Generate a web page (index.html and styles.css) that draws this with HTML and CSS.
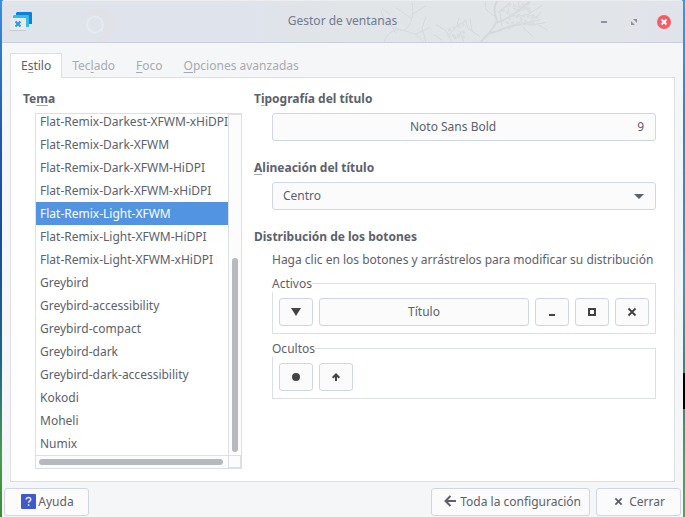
FILE: index.html
```html
<!DOCTYPE html>
<html lang="es">
<head>
<meta charset="utf-8">
<title>Gestor de ventanas</title>
<link rel="stylesheet" href="styles.css">
</head>
<body>
<div class="window">
  <header class="titlebar">
    <svg class="backdrop" viewBox="0 0 681 42" preserveAspectRatio="xMidYMid slice" aria-hidden="true">
      <defs><filter id="soft"><feGaussianBlur stdDeviation="0.6"/></filter></defs>
      <g fill="none" filter="url(#soft)">
        <path d="M80 15q10-12 27-4q12 10 3 24l-8 7h-10q12-10 10-20z" fill="#e1e2e7"/>
        <circle cx="93" cy="24" r="8" fill="#dfe3ea" stroke="#e6eaf2" stroke-width="2"/>
        <g stroke="#d6d9dc" stroke-width="1">
          <path stroke-width="2" d="M478 42c8-8 14-14 17-22M495 20c-4-8-3-14 0-20M487 33c14-3 24-12 46-9M495 22c14-4 20-12 33-21"/>
          <path d="M382 42c4-12 12-14 20-12M402 30c8-6 10-16 8-28M410 14l14-9M409 18l-15-11M400 30l-16-6-5-14M402 30l12 4 8 8M394 33l-6-10M413 34l15-7M424 42l-4-14 4-12M380 8l8 6M450 42l-6-12-10-6M447 35l8-10 2-8M455 25l10-5M462 42l-4-12M440 40l-8-6M478 36l-12-8-3-9M470 30l-2-12M495 18l-12-10M484 8l-1-8M496 12l12-10M508 20l-2-14M514 16l12-2 14-9M518 12l-2-12M528 14l4 10 12-2M521 27l10 9M506 29l14-9M536 24l10 6M511 8l10 2 6-6M500 26l-2-14 8-8M532 18l8-7M525 22l14-3"/>
          <path stroke-dasharray="3 2" stroke-width="3" stroke="#dadde0" d="M506 4l24 5M510 14l26 3M504 22l30 2M500 9l28 14M446 30l16-6M452 38l12-8M520 3l14 15M445 34l20 3"/>
        </g>
      </g>
    </svg>
    <svg class="app-icon" viewBox="0 0 24 20" aria-hidden="true">
      <path fill="#0a80e0" d="M7 0h14q1 0 1 1v11h-3V4H6V1z"/>
      <path fill="#35bce8" d="M4 3h14q1 0 1 1v11h-3V6H3V4z"/>
      <rect x="0" y="6" width="16" height="13" rx="1" fill="#c7cacd"/>
      <rect x="0" y="6" width="16" height="12" rx="1" fill="#e9eaeb"/>
      <path d="M5.500 9.500l5 5m0-5l-5 5" stroke="#2697e2" stroke-width="2"/>
    </svg>
    <h1>Gestor de ventanas</h1>
    <div class="window-controls">
      <button type="button" aria-label="Minimizar"><svg viewBox="0 0 14 14"><path fill="#8e939f" d="M4 6h6v2H4z"/></svg></button>
      <button type="button" aria-label="Maximizar"><svg viewBox="0 0 14 14"><path fill="#8e939f" d="M6 4h4v4zM4 6l4 4H4z"/></svg></button>
      <button type="button" aria-label="Cerrar ventana"><svg viewBox="0 0 14 14"><circle cx="7" cy="7" r="7" fill="#f65c65"/><path d="M4.500 4.500l5 5m0-5l-5 5" stroke="#fff" stroke-width="2"/></svg></button>
    </div>
  </header>

  <div class="tabs" role="tablist">
    <button type="button" class="tab active" role="tab" aria-selected="true">E<u>s</u>tilo</button>
    <button type="button" class="tab" role="tab" aria-selected="false">Tec<u>l</u>ado</button>
    <button type="button" class="tab" role="tab" aria-selected="false"><u>F</u>oco</button>
    <button type="button" class="tab" role="tab" aria-selected="false"><u>O</u>pciones avanzadas</button>
  </div>

  <main class="panel" role="tabpanel">
    <section class="theme">
      <h2 id="theme-title">Te<u>m</u>a</h2>
      <div class="scroller">
        <ul class="rows" role="listbox" aria-labelledby="theme-title" tabindex="0">
          <li role="option">Flat-Remix-Darkest-XFWM-xHiDPI</li>
          <li role="option">Flat-Remix-Dark-XFWM</li>
          <li role="option">Flat-Remix-Dark-XFWM-HiDPI</li>
          <li role="option">Flat-Remix-Dark-XFWM-xHiDPI</li>
          <li role="option" class="selected" aria-selected="true">Flat-Remix-Light-XFWM</li>
          <li role="option">Flat-Remix-Light-XFWM-HiDPI</li>
          <li role="option">Flat-Remix-Light-XFWM-xHiDPI</li>
          <li role="option">Greybird</li>
          <li role="option">Greybird-accessibility</li>
          <li role="option">Greybird-compact</li>
          <li role="option">Greybird-dark</li>
          <li role="option">Greybird-dark-accessibility</li>
          <li role="option">Kokodi</li>
          <li role="option">Moheli</li>
          <li role="option">Numix</li>
        </ul>
        <div class="trough vertical"><div class="thumb"></div></div>
        <div class="trough horizontal"><div class="thumb"></div></div>
        <div class="corner"></div>
      </div>
    </section>

    <div class="settings">
      <section class="group">
        <h2 id="font-title">T<u>i</u>pografía del título</h2>
        <button type="button" class="btn font-button" aria-describedby="font-title"><span class="font-name">Noto Sans Bold</span><span>9</span></button>
      </section>
      <section class="group">
        <h2><label for="align"><u>A</u>lineación del título</label></h2>
        <div class="combo">
          <select id="align" class="btn"><option>Centro</option><option>Izquierda</option><option>Derecha</option></select>
          <svg viewBox="0 0 10 5" aria-hidden="true"><path fill="#5c616c" d="M0 0h10L5 5z"/></svg>
        </div>
      </section>
      <section class="group">
        <h2>Distribución de los botones</h2>
        <p>Haga clic en los botones y arrástrelos para modificar su distribución</p>
        <fieldset>
          <legend>Activos</legend>
          <div class="button-row">
            <button type="button" class="btn square" aria-label="Menú"><svg viewBox="0 0 10 10"><path fill="#444" d="M0 1h10L5 9z"/></svg></button>
            <button type="button" class="btn title-button">Título</button>
            <button type="button" class="btn square" aria-label="Minimizar"><svg viewBox="0 0 10 10"><path fill="#444" d="M2 7h6v2H2z"/></svg></button>
            <button type="button" class="btn square" aria-label="Maximizar"><svg viewBox="0 0 10 10"><path fill="none" stroke="#444" stroke-width="2" d="M2 2h6v6H2z"/></svg></button>
            <button type="button" class="btn square" aria-label="Cerrar"><svg viewBox="0 0 10 10"><path fill="none" stroke="#444" stroke-width="2" d="M1.500 1.500l7 7m0-7l-7 7"/></svg></button>
          </div>
        </fieldset>
        <fieldset>
          <legend>Ocultos</legend>
          <div class="button-row">
            <button type="button" class="btn square" aria-label="Fijar"><svg viewBox="0 0 10 10"><circle cx="5" cy="5" r="4" fill="#444"/></svg></button>
            <button type="button" class="btn square" aria-label="Enrollar"><svg viewBox="0 0 10 10"><path fill="none" stroke="#444" stroke-width="2" d="M5 9V2.500M1.700 5.800L5 2.500l3.300 3.300"/></svg></button>
          </div>
        </fieldset>
      </section>
    </div>
  </main>

  <footer class="actions">
    <button type="button" class="btn help"><svg class="help-icon" viewBox="0 0 15 15" aria-hidden="true"><rect width="15" height="15" rx="1" fill="#4059cf"/><path fill="none" stroke="#e8ebfa" stroke-width="1.500" d="M5.300 5.500q0-2 2.200-2t2.200 1.900q0 1-1 1.700t-1.100 1.700M7.600 10.200v1.800"/></svg>Ayuda</button>
    <button type="button" class="btn all"><svg class="arrow-icon" viewBox="0 0 12 12" aria-hidden="true"><path fill="none" stroke="#5c616c" stroke-width="2" d="M12 6H2M6.500 1L1.500 6l5 5"/></svg>Toda la configuración</button>
    <button type="button" class="btn close"><svg class="close-icon" viewBox="0 0 10 10" aria-hidden="true"><path fill="none" stroke="#5c616c" stroke-width="2" d="M1.500 1.500l7 7m0-7l-7 7"/></svg>Cerrar</button>
  </footer>
</div>
</body>
</html>
```
FILE: styles.css
```css
* {
  box-sizing: border-box;
}

body {
  margin: 0;
  padding: 0 2px;
  height: 100vh;
  font: 12px/17px "Noto Sans", sans-serif;
  color: #5c616c;
  background:
    linear-gradient(#000, #000) right 0 top 373px / 2px 36px no-repeat,
    linear-gradient(#3f96e4, #3a7fc0 25%, #4092b4 55%, #3a7f80 75%, #4f9f58 90%, #5aa344) right / 2px 100% no-repeat,
    linear-gradient(#3a8ee0, #2359ae 25%, #174c98 45%, #1f6588 70%, #4a9a54 88%, #3f8a34);
}

button,
select {
  font: inherit;
  color: inherit;
}

svg {
  display: block;
  flex: none;
}

h1,
h2,
p,
ul {
  margin: 0;
  padding: 0;
}

h2 {
  font-size: 12px;
  font-weight: 700;
}

u {
  text-decoration-color: #a6a9b0;
  text-decoration-thickness: 1px;
  text-underline-offset: 2px;
}

.window {
  display: flex;
  flex-direction: column;
  height: 100%;
  background: #f5f6f7;
  border-radius: 3px 3px 0 0;
  overflow: hidden;
}

.titlebar {
  position: relative;
  display: grid;
  grid-template-columns: 1fr auto 1fr;
  align-items: center;
  height: 43px;
  padding: 0 12px;
  border-top: 1px solid #eceef1;
  border-bottom: 1px solid #cbcfdb;
  background: linear-gradient(90deg, #dfe3ea, #dfe3ec 33%, #e1e5e8 50%, #e1e5e8 82%, #e1e3eb);
}

.backdrop {
  position: absolute;
  inset: 0;
  width: 100%;
  height: 100%;
}

.app-icon {
  position: relative;
  width: 24px;
  height: 20px;
  margin-left: -4px;
}

.titlebar h1 {
  position: relative;
  font-size: 12px;
  font-weight: 400;
  line-height: 17px;
  padding-bottom: 2px;
  color: #707a92;
}

.window-controls {
  position: relative;
  display: flex;
  justify-content: flex-end;
  gap: 16px;
}

.window-controls button {
  padding: 0;
  border: 0;
  background: none;
}

.window-controls svg {
  width: 14px;
  height: 14px;
}

.tabs {
  position: relative;
  display: flex;
  padding: 10px 8px 0;
  margin-bottom: -1px;
}

.tab {
  height: 25px;
  padding: 0 10px 2px;
  border: 1px solid transparent;
  border-bottom: 0;
  background: none;
  color: #a8abb1;
}

.tab + .tab {
  margin-left: -1px;
}

.tab.active {
  border-color: #dcdfe3;
  background: #fff;
  color: #5c616c;
}

.panel {
  flex: 1;
  min-height: 0;
  display: flex;
  gap: 12px;
  margin: 0 8px;
  padding: 12px 18px 12px 12px;
  border: 1px solid #dcdfe3;
  background: #fff;
}

.theme {
  display: flex;
  flex-direction: column;
  gap: 6px;
  min-height: 0;
}

.scroller {
  flex: 1;
  min-height: 0;
  display: grid;
  grid-template: minmax(0, 1fr) 13px / 192px 13px;
  margin-left: 12px;
  border: 1px solid #dcdfe3;
}

.rows {
  display: flex;
  flex-direction: column;
  justify-content: flex-end;
  overflow: hidden;
  list-style: none;
}

.rows li {
  flex: none;
  padding: 3px 4px;
  white-space: nowrap;
}

.rows .selected {
  background: #5294e2;
  color: #fff;
}

.trough {
  display: flex;
  background: #fcfcfc;
}

.thumb {
  border-radius: 3px;
  background: #b8b9be;
}

.vertical {
  flex-direction: column;
  justify-content: flex-end;
  padding: 3px;
  border-left: 1px solid #dcdfe3;
  border-top: 1px solid #dcdfe3;
}

.vertical .thumb {
  height: 58%;
}

.horizontal {
  padding: 3px;
  border-top: 1px solid #dcdfe3;
}

.horizontal .thumb {
  width: 99%;
}

.corner {
  border: 1px solid #dcdfe3;
  background: #fcfcfc;
}

.settings {
  flex: 1;
  display: flex;
  flex-direction: column;
  gap: 18px;
}

.group {
  display: flex;
  flex-direction: column;
  gap: 6px;
}

.group > :not(h2) {
  margin-left: 18px;
}

.group p {
  margin-bottom: 1px;
}

.btn {
  display: flex;
  align-items: center;
  justify-content: center;
  height: 28px;
  padding: 0 10px 2px;
  border: 1px solid #cfd6e6;
  border-radius: 3px;
  background: #fbfbfc;
}

.font-button {
  padding-right: 11px;
}

.font-name {
  flex: 1;
  padding-right: 14px;
}

.combo {
  display: grid;
  align-items: center;
}

.combo > * {
  grid-area: 1 / 1;
}

.combo select {
  width: 100%;
  appearance: none;
}

.combo svg {
  width: 10px;
  height: 5px;
  margin-right: 12px;
  justify-self: end;
  pointer-events: none;
}

fieldset {
  min-width: 0;
  margin: 0;
  padding: 6px 6px 7px;
  border: 1px solid #dcdfe3;
}

legend {
  margin-left: -7px;
  padding: 0;
}

.button-row {
  display: flex;
  gap: 6px;
}

.square {
  width: 34px;
  padding: 0;
}

.square svg {
  width: 10px;
  height: 10px;
}

.title-button {
  flex: 1;
}

.actions {
  display: flex;
  gap: 6px;
  padding: 6px 2px 1px;
}

.actions .btn {
  min-width: 85px;
}

.help {
  gap: 2px;
  margin-right: auto;
  padding-left: 12px;
}

.actions .all {
  gap: 4px;
  padding-left: 12px;
  padding-right: 8px;
}

.actions .close {
  gap: 6px;
  padding-left: 12px;
}

.help-icon {
  width: 15px;
  height: 15px;
}

.arrow-icon {
  width: 12px;
  height: 12px;
}

.close-icon {
  width: 9px;
  height: 9px;
}
```
